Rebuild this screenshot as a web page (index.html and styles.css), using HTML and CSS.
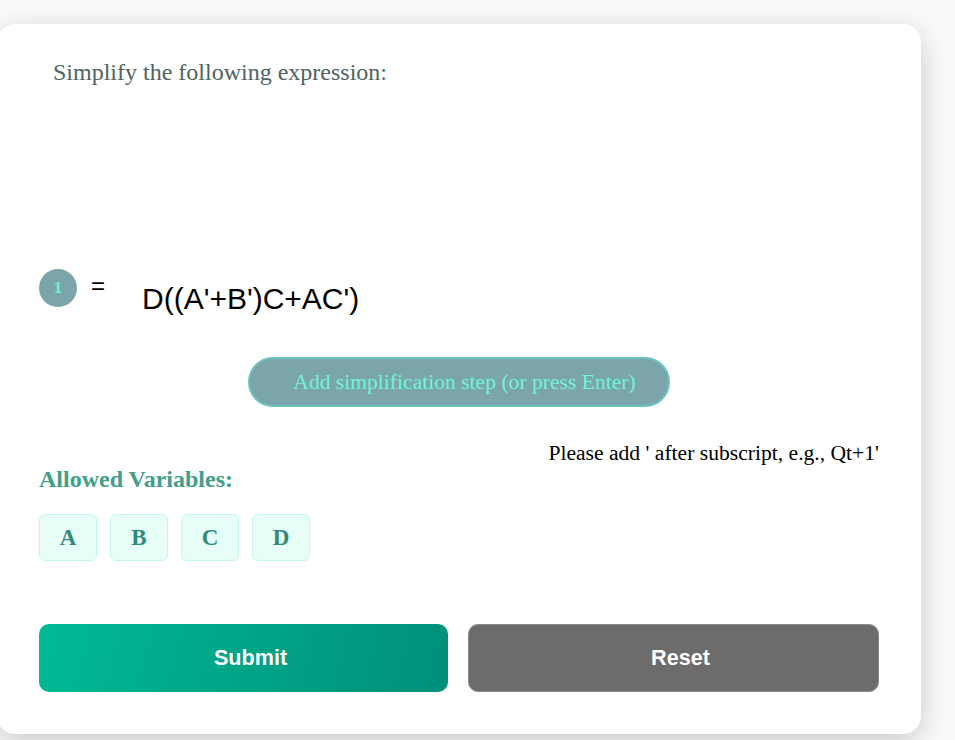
FILE: index.html
```html
<!DOCTYPE html>
<html>
<head>
<meta charset="utf-8">
<link rel="stylesheet" href="styles.css">
</head>
<body>
<div class="card">
  <div class="prompt">Simplify the following expression:</div>
  <div class="step-row">
    <div class="step-num">1</div>
    <div class="eq">=</div>
    <div class="expr">D((A'+B')C+AC')</div>
  </div>
  <div class="add-wrap">
    <button class="add-btn">Add simplification step (or press Enter)</button>
  </div>
  <div class="hint">Please add ' after subscript, e.g., Qt+1'</div>
  <div class="vars-title">Allowed Variables:</div>
  <div class="vars">
    <div class="var">A</div>
    <div class="var">B</div>
    <div class="var">C</div>
    <div class="var">D</div>
  </div>
  <div class="actions">
    <button class="btn submit">Submit</button>
    <button class="btn reset">Reset</button>
  </div>
</div>
</body>
</html>
```
FILE: styles.css
```css
html, body {
  margin: 0;
  padding: 0;
  background: #fafafa;
  height: 740px;
  overflow: hidden;
}
body {
  font-family: "Liberation Serif", "Times New Roman", serif;
}
.card {
  box-sizing: border-box;
  width: 924px;
  margin: 24px 0 0 -3px;
  padding: 35px 42px 42px 42px;
  background: #ffffff;
  border-radius: 18px;
  box-shadow: 0 8px 30px rgba(0, 0, 0, 0.2);
}
.prompt {
  padding-left: 14px;
  font-size: 24px;
  color: #4e6363;
  height: 210px;
}
.step-row {
  display: flex;
  align-items: flex-start;
  height: 48px;
}
.step-num {
  width: 38px;
  height: 38px;
  border-radius: 50%;
  background: #7ba5aa;
  color: #6ff2d4;
  font-weight: bold;
  font-size: 17px;
  display: flex;
  align-items: center;
  justify-content: center;
}
.eq {
  margin-left: 14px;
  margin-top: 3px;
  font-family: "Liberation Sans", Arial, sans-serif;
  font-size: 24px;
  color: #000;
}
.expr {
  margin-left: 37px;
  margin-top: 13px;
  font-family: "Liberation Sans", Arial, sans-serif;
  font-size: 30px;
  color: #000;
}
.add-wrap {
  display: flex;
  justify-content: center;
  margin-top: 40px;
}
.add-btn {
  box-sizing: border-box;
  width: 422px;
  height: 50px;
  border-radius: 25px;
  background: #7ba5aa;
  border: 2px solid #6cc3bd;
  color: #6ff5d6;
  font-family: "Liberation Serif", "Times New Roman", serif;
  font-size: 21.6px;
  padding: 0 0 0 11px;
  text-align: center;
}
.hint {
  margin-top: 35px;
  text-align: right;
  font-size: 21.6px;
  color: #000;
  line-height: 22px;
}
.vars-title {
  margin-top: 2px;
  font-size: 24px;
  font-weight: bold;
  color: #3fa08a;
}
.vars {
  display: flex;
  gap: 13px;
  margin-top: 21px;
}
.var {
  box-sizing: border-box;
  width: 58px;
  height: 47px;
  border: 1px solid #c3f8eb;
  border-radius: 6px;
  background: #e6fdf8;
  color: #2f8b77;
  font-weight: bold;
  font-size: 23px;
  display: flex;
  align-items: center;
  justify-content: center;
}
.actions {
  display: flex;
  gap: 20px;
  margin-top: 63px;
}
.btn {
  flex: 1;
  height: 68px;
  border-radius: 10px;
  color: #fff;
  font-family: "Liberation Sans", Arial, sans-serif;
  font-weight: bold;
  font-size: 21.6px;
  padding: 0 0 0 14px;
}
.submit {
  border: none;
  background: linear-gradient(105deg, #00ba95 0%, #008f78 100%);
}
.reset {
  border: 1px solid #8a8a8a;
  background: #6e6b6c;
}
```
